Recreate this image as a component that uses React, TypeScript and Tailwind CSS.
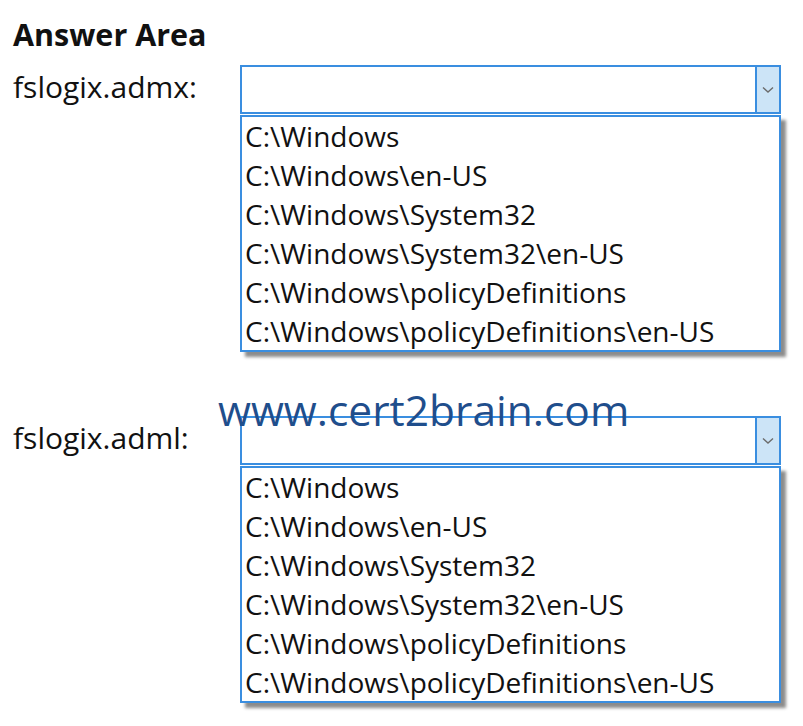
import React from "react";

const options = [
  "C:\\Windows",
  "C:\\Windows\\en-US",
  "C:\\Windows\\System32",
  "C:\\Windows\\System32\\en-US",
  "C:\\Windows\\policyDefinitions",
  "C:\\Windows\\policyDefinitions\\en-US",
];

function Chevron() {
  return (
    <svg width="12" height="8" viewBox="0 0 12 8" fill="none">
      <path d="M1 1.5 L6 6 L11 1.5" stroke="#6b6b6b" strokeWidth="1.4" />
    </svg>
  );
}

function DropDown({ label }: { label: string }) {
  return (
    <div className="flex">
      <div className="w-[227px] pt-[2px] text-[30px] leading-[40px] text-[#111]">{label}</div>
      <div className="flex w-[541px] flex-col">
        <div className="flex h-[49px] border-2 border-[#3a8ee0] bg-white">
          <div className="flex-1" />
          <div className="flex w-[24px] items-center justify-center border-l-2 border-[#3a8ee0] bg-[#cce4f7]">
            <Chevron />
          </div>
        </div>
        <div className="mt-[1px] h-[237px] border-2 border-[#3a8ee0] bg-white pl-[3px] shadow-[5px_5px_3px_rgba(0,0,0,0.45)]">
          {options.map((o) => (
            <div key={o} className="h-[39px] text-[28px] leading-[39px] text-[#111] whitespace-nowrap">
              {o}
            </div>
          ))}
        </div>
      </div>
    </div>
  );
}

export default function App() {
  return (
    <div
      className="relative h-[726px] w-[803px] bg-white pl-[13px] pt-[14px]"
      style={{ fontFamily: "'Open Sans', 'Liberation Sans', sans-serif" }}
    >
      <div className="h-[51px] text-[30.5px] font-bold leading-[40px] text-[#111]">Answer Area</div>
      <div className="flex flex-col gap-[64px]">
        <DropDown label="fslogix.admx:" />
        <DropDown label="fslogix.adml:" />
      </div>
      <div className="absolute left-[218px] top-[385px] text-[42.5px] leading-[50px] text-[#1f4e8c]">
        www.cert2brain.com
      </div>
    </div>
  );
}
